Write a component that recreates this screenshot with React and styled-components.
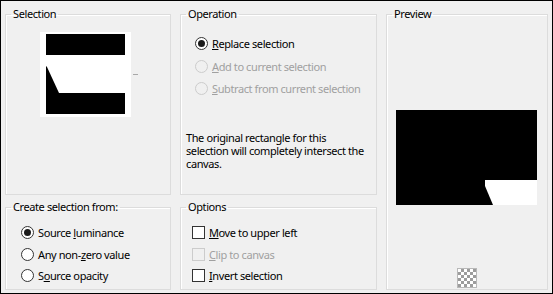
import React from "react";
import styled, { createGlobalStyle } from "styled-components";

const Global = createGlobalStyle`
  html, body { margin: 0; padding: 0; background: #f0f0f0; }
  body { font-family: "Noto Sans", "Open Sans", sans-serif; font-size: 11px; color: #000; letter-spacing: -0.4px; }
`;

const Dialog = styled.div`
  width: 553px;
  height: 294px;
  box-sizing: border-box;
  border: 1px solid #000;
  background: #f0f0f0;
  display: grid;
  grid-template-columns: 166px 197px 162px;
  grid-template-rows: 188px 90px;
  column-gap: 9px;
  row-gap: 5px;
  padding: 6px 0 0 4px;
`;

const Group = styled.fieldset`
  margin: 0;
  padding: 0;
  min-width: 0;
  border: 1px solid #dcdcdc;
  box-shadow: inset 1px 1px 0 #fff;
  display: flex;
  flex-direction: column;
  grid-row: ${(p) => p.$row || "auto"};
  grid-column: ${(p) => p.$col || "auto"};
`;

const Legend = styled.legend`
  margin-left: 5px;
  padding: 0 2px;
  font-size: 11px;
  line-height: 14px;
  color: #000;
`;

const Thumb = styled.div`
  align-self: center;
  margin: 11px 0 0 0;
  display: flex;
  align-items: center;
  gap: 2px;
  padding-left: 2px;
`;

const Tick = styled.span`
  width: 5px;
  height: 1px;
  background: #a8a8a8;
`;

const List = styled.div`
  display: flex;
  flex-direction: column;
  gap: ${(p) => p.$gap || 9}px;
  padding: ${(p) => p.$pad || "0"};
`;

const Item = styled.label`
  display: flex;
  align-items: center;
  gap: 4px;
  height: 13px;
  line-height: 13px;
  color: ${(p) => (p.$disabled ? "#a0a0a0" : "#000")};
  white-space: nowrap;
`;

const Radio = styled.span`
  width: 13px;
  height: 13px;
  box-sizing: border-box;
  border-radius: 50%;
  border: 1px solid ${(p) => (p.$disabled ? "#cccccc" : "#333")};
  background: ${(p) => (p.$disabled ? "#f0f0f0" : "#fff")};
  display: flex;
  align-items: center;
  justify-content: center;
  flex: none;
  &::after {
    content: "";
    display: ${(p) => (p.$checked ? "block" : "none")};
    width: 7px;
    height: 7px;
    border-radius: 50%;
    background: #1a1a1a;
  }
`;

const Check = styled.span`
  width: 13px;
  height: 13px;
  box-sizing: border-box;
  border: 1px solid ${(p) => (p.$disabled ? "#cccccc" : "#333")};
  background: ${(p) => (p.$disabled ? "#f0f0f0" : "#fff")};
  flex: none;
`;

const U = styled.span`
  text-decoration: underline;
  text-underline-offset: 1px;
`;

const Note = styled.p`
  margin: 36px 0 0 5px;
  line-height: 13px;
  width: 180px;
`;

const PreviewArea = styled.div`
  flex: 1;
  display: flex;
  flex-direction: column;
  align-items: center;
`;

const PreviewPic = styled.div`
  margin-top: 89px;
  margin-right: 1px;
  width: 141px;
  height: 95px;
`;

const Checker = styled.div`
  margin-top: 63px;
  width: 20px;
  height: 20px;
  box-sizing: border-box;
  border: 1px solid #b8b8b8;
  background-color: #fff;
  background-image:
    linear-gradient(45deg, #9c9c9c 25%, transparent 25%, transparent 75%, #9c9c9c 75%),
    linear-gradient(45deg, #9c9c9c 25%, transparent 25%, transparent 75%, #9c9c9c 75%);
  background-size: 6px 6px;
  background-position: 0 0, 3px 3px;
`;

const SelThumb = () => (
  <svg width="91" height="85" viewBox="0 0 91 85">
    <rect x="0" y="0" width="91" height="85" fill="#fff" />
    <rect x="6" y="2" width="79" height="21" fill="#000" />
    <rect x="6" y="61" width="79" height="21" fill="#000" />
    <polygon points="6,34 7,35 19,61 6,61" fill="#000" />
  </svg>
);

const PrevPic = () => (
  <svg width="141" height="95" viewBox="0 0 141 95">
    <rect x="0" y="0" width="141" height="95" fill="#000" />
    <polygon points="89,70 141,70 141,95 97,95 89,76" fill="#fff" />
  </svg>
);

export default function App() {
  return (
    <>
      <Global />
      <Dialog>
        <Group $col="1" $row="1">
          <Legend>Selection</Legend>
          <Thumb>
            <SelThumb />
            <Tick />
          </Thumb>
        </Group>
        <Group $col="2" $row="1">
          <Legend>Operation</Legend>
          <List $gap={9.5} $pad="16px 0 0 14px">
            <Item>
              <Radio $checked />
              <span><U>R</U>eplace selection</span>
            </Item>
            <Item $disabled>
              <Radio $disabled />
              <span><U>A</U>dd to current selection</span>
            </Item>
            <Item $disabled>
              <Radio $disabled />
              <span><U>S</U>ubtract from current selection</span>
            </Item>
          </List>
          <Note>
            The original rectangle for this selection will completely intersect the canvas.
          </Note>
        </Group>
        <Group $col="3" $row="1 / span 2">
          <Legend>Preview</Legend>
          <PreviewArea>
            <PreviewPic>
              <PrevPic />
            </PreviewPic>
            <Checker />
          </PreviewArea>
        </Group>
        <Group $col="1" $row="2">
          <Legend>Create selection from:</Legend>
          <List $gap={8.5} $pad="12px 0 0 15px">
            <Item>
              <Radio $checked />
              <span>Source <U>l</U>uminance</span>
            </Item>
            <Item>
              <Radio />
              <span>Any non-<U>z</U>ero value</span>
            </Item>
            <Item>
              <Radio />
              <span>S<U>o</U>urce opacity</span>
            </Item>
          </List>
        </Group>
        <Group $col="2" $row="2">
          <Legend>Options</Legend>
          <List $gap={8.5} $pad="12px 0 0 11px">
            <Item>
              <Check />
              <span><U>M</U>ove to upper left</span>
            </Item>
            <Item $disabled>
              <Check $disabled />
              <span><U>C</U>lip to canvas</span>
            </Item>
            <Item>
              <Check />
              <span><U>I</U>nvert selection</span>
            </Item>
          </List>
        </Group>
      </Dialog>
    </>
  );
}
